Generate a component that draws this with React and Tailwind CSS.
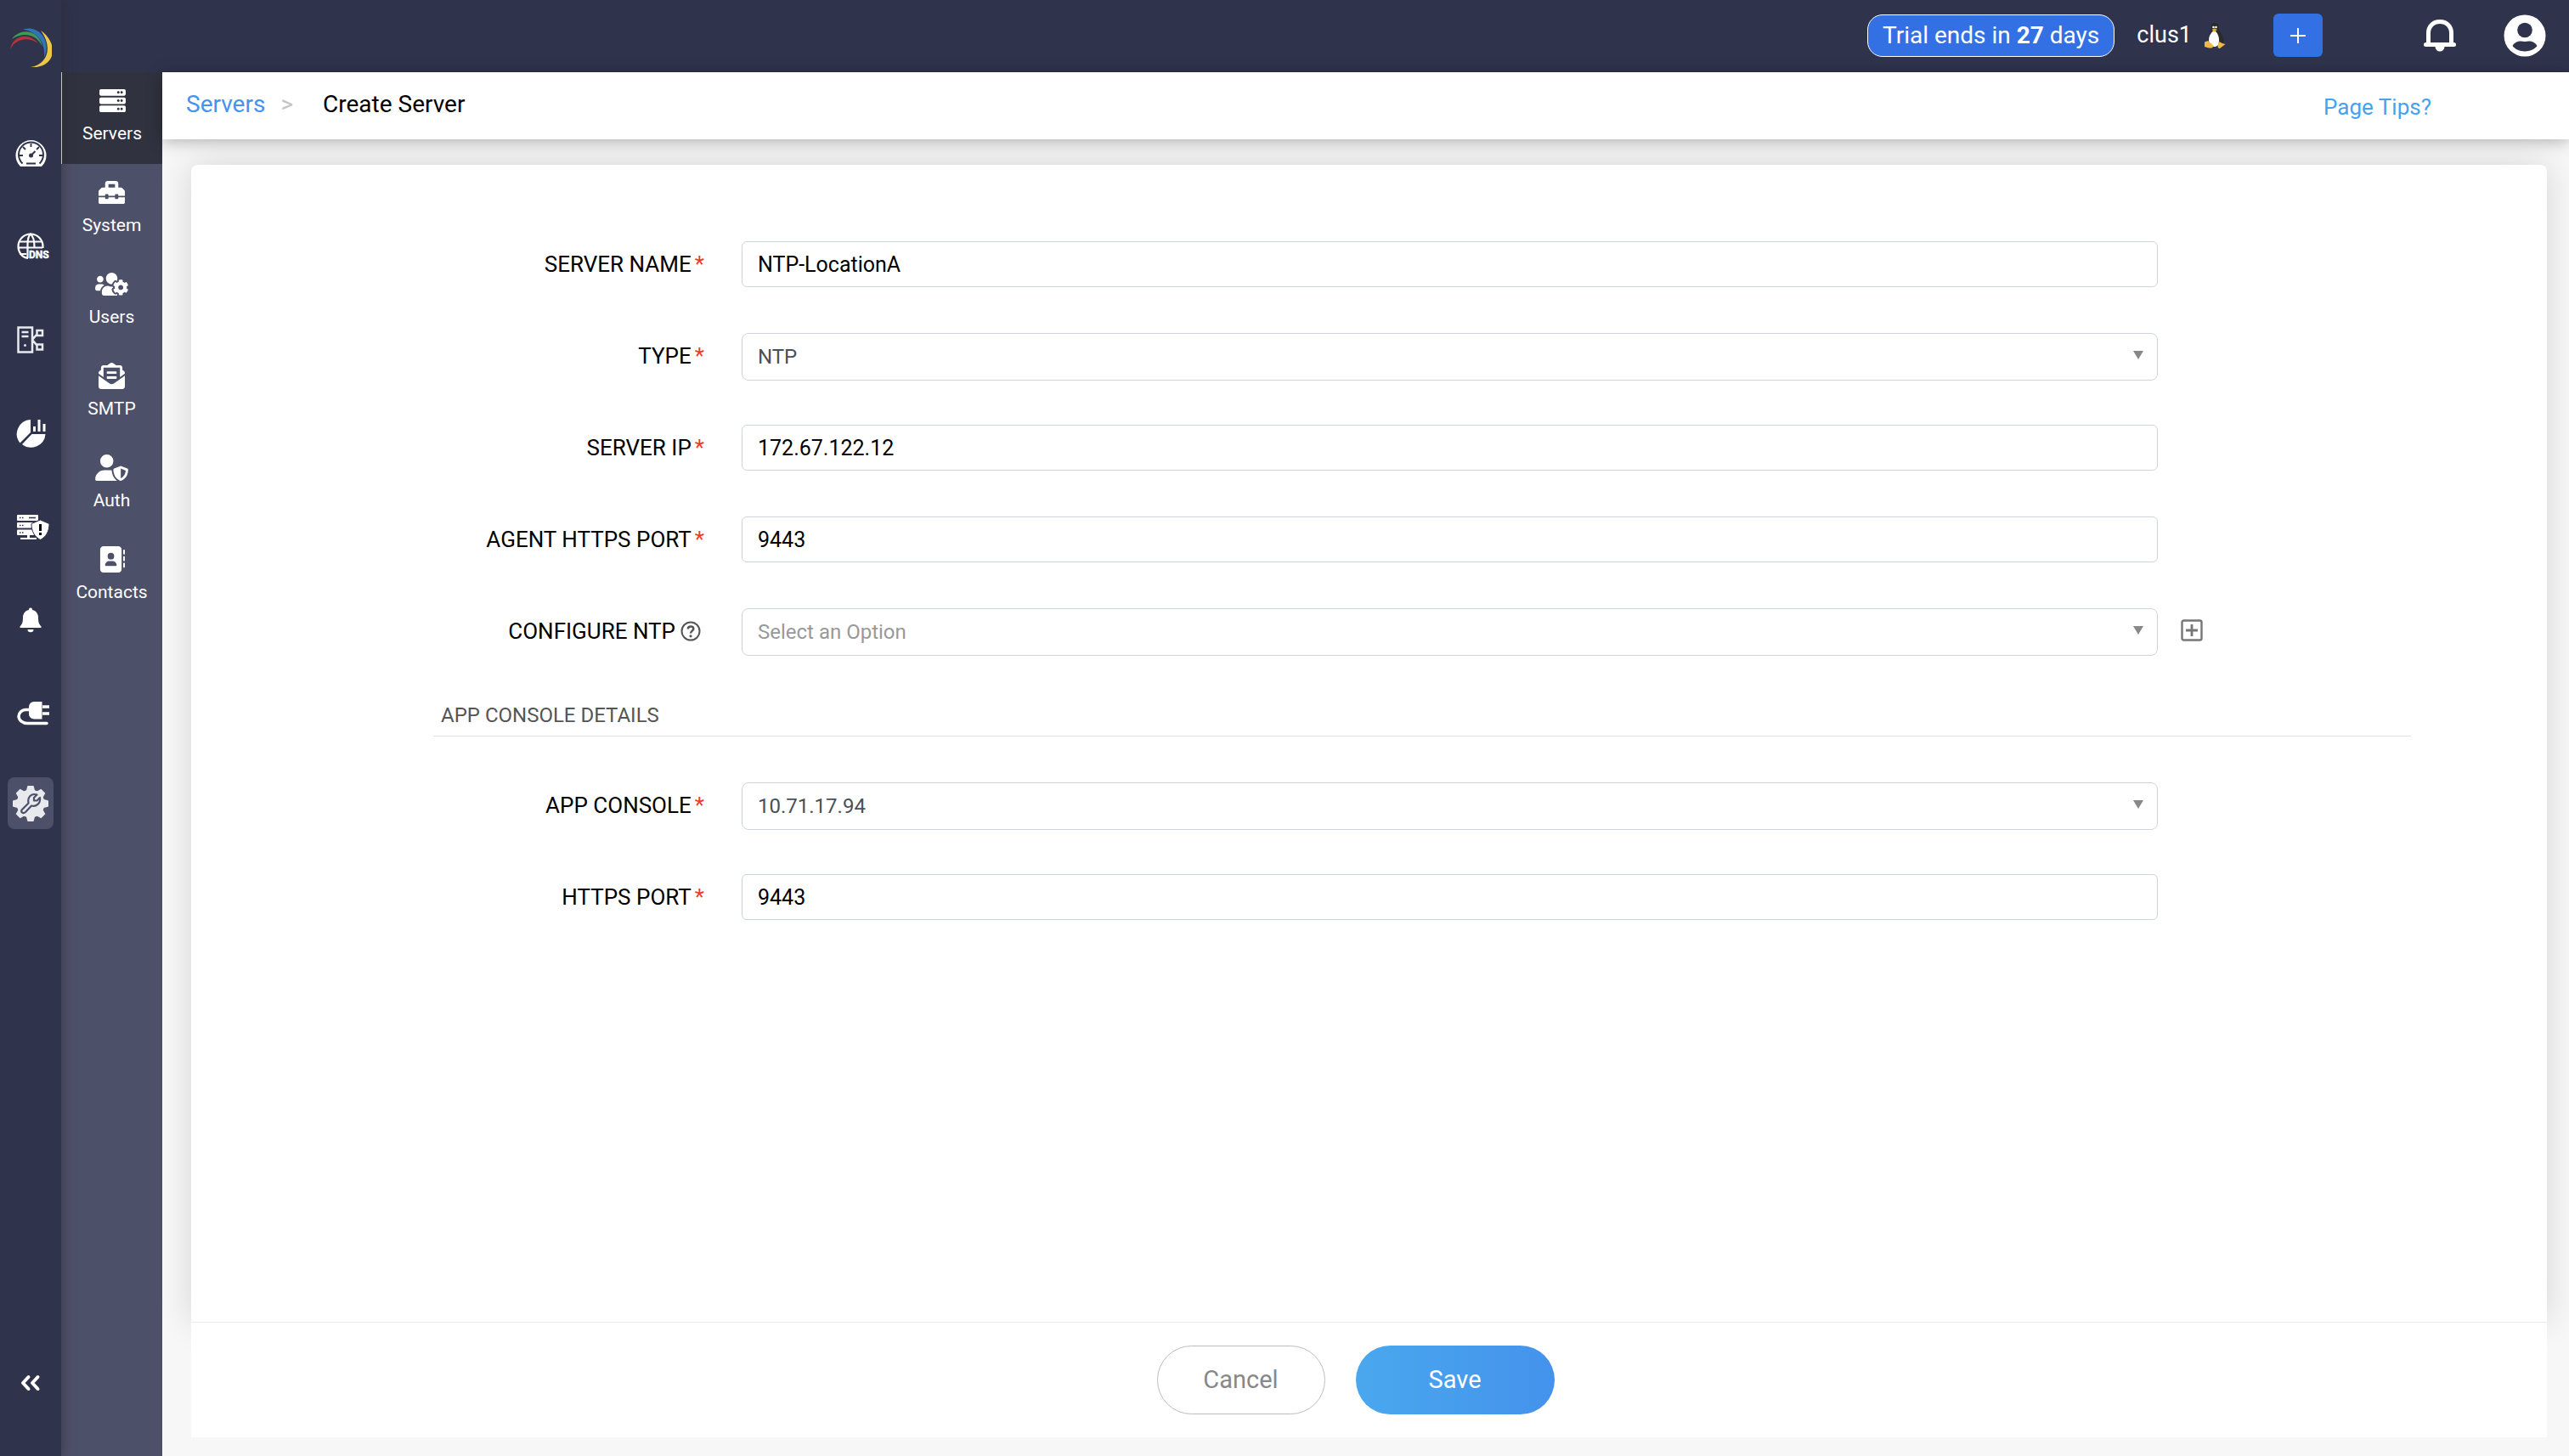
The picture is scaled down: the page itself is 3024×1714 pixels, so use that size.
import { useId } from "react";
import { FaServer, FaToolbox, FaUsersCog, FaEnvelopeOpenText } from "react-icons/fa";
import { FaUserShield, FaAddressBook } from "react-icons/fa6";

function LogoMark() {
  return (
    <svg viewBox="0 0 50 48" className="h-12 w-[50px]" aria-hidden="true">
      <path d="M1 25C4 9 22 4 34 18C22 10 8 12 1 25Z" fill="#b8323c" />
      <path d="M3 13C13 -1 35 2 39 22C32 7 17 4 3 13Z" fill="#3f9a58" />
      <path d="M16 1.500C35 -4 50 15 41 35C43 18 34 5 16 1.500Z" fill="#2f74b5" />
      <path d="M37 3C59 18 55 48 25 46C46 42 51 22 37 3Z" fill="#edc748" />
    </svg>
  );
}

function GaugeIcon() {
  return (
    <svg viewBox="0 0 37 33" className="h-[33px] w-[37px]" fill="none" stroke="white" aria-hidden="true">
      <path d="M6 32A18 18 0 1 1 31 32Z" fill="white" stroke="none" />
      <path d="M8.500 28.500A14.500 14.500 0 1 1 28.500 28.500" stroke="#2f334c" strokeWidth="2" />
      <path d="M5 19h4M28 19h4M18.500 5v4M9 9l3 3M28 9l-3 3M13 28.500h11" stroke="#2f334c" strokeWidth="1.800" />
      <path d="M18.500 19l5-5" stroke="#2f334c" strokeWidth="2" />
      <circle cx="18.500" cy="19" r="2.500" fill="#2f334c" stroke="none" />
    </svg>
  );
}

function DnsIcon() {
  return (
    <svg viewBox="0 0 42 36" className="h-9 w-[42px]" fill="none" stroke="white" strokeWidth="2.200" aria-hidden="true">
      <g transform="translate(2 2)">
        <path d="M13 30C6 29 1.500 23 1.500 16A14.500 14.500 0 0 1 30.500 16V18" />
        <path d="M3 10.500H29M1.500 17.500H30M3 25H11" />
        <path d="M12.500 30V14C12.500 8 13 4 16 1.500C19 4 20.500 10 20.500 17" />
        <text x="14" y="30" fontFamily="Roboto, sans-serif" fontSize="12" fontWeight="700" fill="white" stroke="white" strokeWidth="0.500">
          DNS
        </text>
      </g>
    </svg>
  );
}

function TopologyIcon() {
  return (
    <svg viewBox="0 0 32 32" className="size-8" fill="none" stroke="#e8eaf0" strokeWidth="2.500" aria-hidden="true">
      <path d="M1.500 1.500H18V30.500H1.500ZM5.500 7H13.500M5.500 12H13.500M23.500 5H30V11H23.500ZM23.500 21.500H30V27.500H23.500ZM23 10L18 16L23 22" />
      <circle cx="9.500" cy="22.500" r="1.500" fill="#e8eaf0" stroke="none" />
    </svg>
  );
}

function ReportIcon() {
  return (
    <svg viewBox="0 0 35 35" className="size-[35px]" fill="white" aria-hidden="true">
      <path d="M17 1V16L4.500 28.500A17 17 0 0 1 17 1Z" />
      <path d="M18.500 18H34.500A17 17 0 0 1 7 30Z" />
      <path d="M20 9h3v6h-3zM25.500 1h3v14h-3zM31.500 6h3v9h-3z" />
    </svg>
  );
}

function ServerAlertIcon() {
  return (
    <svg viewBox="0 0 40 31" className="h-[31px] w-10" aria-hidden="true">
      <g fill="white">
        <rect x="1" y="1" width="25" height="7" rx="1" />
        <rect x="1" y="10" width="20" height="6.500" rx="1" />
        <rect x="1" y="18.500" width="20" height="6.500" rx="1" />
        <path d="M13 24h3v4h8v2H5v-2h8z" />
        <path d="M28.500 7L39 11.500C39 21 35 27 28.500 30.500C22 27 18 21 18 11.500Z" stroke="#2f334c" strokeWidth="1" />
      </g>
      <path d="M4 4.500h1.500M7 4.500h1.500M4 13.500h1.500M7 13.500h1.500M4 22h1.500M7 22h1.500M15 4.500h8" stroke="#2f334c" strokeWidth="1.500" />
      <path d="M28.500 12v8M28.500 22v3" stroke="black" strokeWidth="3" />
    </svg>
  );
}

function AlertBellIcon() {
  return (
    <svg viewBox="0 0 26 30" className="h-[30px] w-[26px]" fill="white" aria-hidden="true">
      <path d="M13 0.500a2 2 0 0 1 2 2.500c5 1 7 5 7 9c0 6 1 7.500 3.500 10.500V24H.5V22.500C3 19.500 4 18 4 12c0-4 2-8 7-9a2 2 0 0 1 2-2.500Z" />
      <path d="M9.500 26h7a3.500 3.200 0 0 1-7 0Z" />
    </svg>
  );
}

function PlugIcon() {
  return (
    <svg viewBox="0 0 39 30" className="h-[30px] w-[39px]" aria-hidden="true">
      <path d="M14 10.500H10A8 8 0 0 0 2 18C2 23 7 26.500 12 26.500H35" fill="none" stroke="white" strokeWidth="3.500" strokeLinecap="round" />
      <path d="M29.500 1V21.500H20A6 6 0 0 1 14 15.500V7A6 6 0 0 1 20 1Z" fill="white" />
      <path d="M30 7h8M30 15h8" stroke="white" strokeWidth="3.500" />
    </svg>
  );
}

function GearWrenchIcon() {
  const teeth = [0, 45, 90, 135, 180, 225, 270, 315];
  return (
    <svg viewBox="0 0 42 42" className="size-[42px]" aria-hidden="true">
      <g fill="#e8e9ed">
        <circle cx="21" cy="21" r="16.500" />
        {teeth.map((angle) => (
          <path key={angle} d="M15.500 7L17.500 0H24.500L26.500 7Z" transform={`rotate(${angle} 21 21)`} />
        ))}
      </g>
      <path
        d="M11 28L18.500 20.500C17 13 22 8.500 28.500 10.500L25 14V17.500L28.500 17.500L32 14C33 21 27.500 25 22 23.500L15 31C12 33.500 8.500 30.500 11 28Z"
        fill="none"
        stroke="#4d5069"
        strokeWidth="2.200"
        strokeLinejoin="round"
      />
    </svg>
  );
}

function CollapseIcon() {
  return (
    <svg viewBox="0 0 24 20" className="h-5 w-6" fill="none" stroke="white" strokeWidth="4" strokeLinecap="round" strokeLinejoin="round" aria-hidden="true">
      <path d="M9.500 3L3 10L9.500 17M20.500 3L14 10L20.500 17" />
    </svg>
  );
}

function PenguinIcon() {
  return (
    <svg viewBox="0 0 26 30" className="h-[30px] w-[26px]" aria-hidden="true">
      <path d="M13 0C16.500 0 17.500 2 17.500 5.500C17.500 10 23.500 14 23.500 21C23.500 26 20 28 13 28C7 28 4 26 5 20C6 15 9 10 8.500 5.500C8.500 2 10 0 13 0Z" fill="#2b2b2b" />
      <path d="M12 9C14 9 17.500 13 18 19C18.500 26 16 28 12.500 28C9 28 6 24 6 20C6 15 9 11 12 9Z" fill="white" />
      <circle cx="11.500" cy="5" r="1.300" fill="white" />
      <circle cx="14.500" cy="5" r="1.300" fill="white" />
      <path d="M9.500 8L12.500 6.500L16 8L12.500 10.500Z" fill="#f0b02e" />
      <path d="M1 22.500L5 21L11 26C12 29 9 30 6 29.500L1 28Z" fill="#f0b846" />
      <path d="M18 22L22 24L25.500 25L19 30C16 30 16 27 18 22Z" fill="#f0b846" />
    </svg>
  );
}

function HeaderBellIcon() {
  return (
    <svg viewBox="0 0 38 38" className="size-[38px]" aria-hidden="true">
      <path d="M5.500 29V16C5.500 8 11 2.500 19 2.500S32.500 8 32.500 16V29" fill="none" stroke="white" strokeWidth="5" />
      <path d="M2.500 27H35.500A2.500 2.500 0 0 1 35.500 32H24.500A5.500 5.500 0 0 1 13.500 32H2.500A2.500 2.500 0 0 1 2.500 27Z" fill="white" />
    </svg>
  );
}

function AccountIcon() {
  return (
    <svg viewBox="0 0 50 50" className="size-[50px]" aria-hidden="true">
      <circle cx="25" cy="25" r="24.500" fill="white" />
      <circle cx="25" cy="18.500" r="8.800" fill="#2f334c" />
      <path d="M10.500 37C13 32 19 30.500 25 32C31 30.500 37 32 39.500 37C33 45.500 17 45.500 10.500 37Z" fill="#2f334c" />
    </svg>
  );
}

function HelpIcon() {
  return (
    <svg viewBox="0 0 24 24" className="size-6" fill="none" stroke="#555" strokeWidth="2" aria-hidden="true">
      <circle cx="12" cy="12" r="10.500" />
      <path d="M8.800 9.500C9 5.500 15.300 5.800 15.300 9.300C15.300 11.500 12 11.800 12 14.500" strokeWidth="2.500" />
      <circle cx="12" cy="17.800" r="1.600" fill="#555" stroke="none" />
    </svg>
  );
}

function AddBoxIcon() {
  return (
    <svg viewBox="0 0 26 26" className="size-[26px]" fill="none" stroke="#777" aria-hidden="true">
      <rect x="1.500" y="1.500" width="23" height="23" rx="2" strokeWidth="2.400" />
      <path d="M13 6V20M6 13H20" strokeWidth="2.800" />
    </svg>
  );
}

const mainNav = [
  { label: "Dashboard", Icon: GaugeIcon },
  { label: "DNS", Icon: DnsIcon, wide: true },
  { label: "Infrastructure", Icon: TopologyIcon },
  { label: "Reports", Icon: ReportIcon },
  { label: "Server protection", Icon: ServerAlertIcon, wide: true },
  { label: "Alerts", Icon: AlertBellIcon },
  { label: "Integrations", Icon: PlugIcon, wide: true },
];

const subNav = [
  { label: "Servers", Icon: FaServer, active: true },
  { label: "System", Icon: FaToolbox },
  { label: "Users", Icon: FaUsersCog },
  { label: "SMTP", Icon: FaEnvelopeOpenText },
  { label: "Auth", Icon: FaUserShield },
  { label: "Contacts", Icon: FaAddressBook },
];

function MainSidebar() {
  return (
    <nav aria-label="Main" className="z-10 flex w-[72px] shrink-0 flex-col items-center bg-[#2f334c] pt-[33px] shadow-[0_0_14px_rgba(40,40,40,0.55)]">
      <LogoMark />
      <div className="mt-11 flex flex-col items-center">
        {mainNav.map(({ label, Icon, wide }) => (
          <a key={label} href="#" aria-label={label} className={"flex h-[110px] items-center " + (wide ? "pl-1.5" : "")}>
            <Icon />
          </a>
        ))}
        <a href="#" aria-label="Settings" aria-current="page" className="mt-5 flex h-[61px] w-[54px] items-center justify-center rounded-lg bg-[#4d5069]">
          <GearWrenchIcon />
        </a>
      </div>
      <button type="button" aria-label="Collapse menu" className="mt-auto mb-[76px]">
        <CollapseIcon />
      </button>
    </nav>
  );
}

function SubSidebar() {
  return (
    <nav aria-label="Settings" className="w-[119px] shrink-0 bg-[#4d5069]">
      {subNav.map(({ label, Icon, active }) => (
        <a
          key={label}
          href="#"
          className={
            "flex h-27 flex-col items-center gap-2 pt-[18px] text-[21px] leading-[30px] text-white " +
            (active ? "border-l border-white bg-[#30323f]" : "")
          }
        >
          <Icon className="h-[31px] w-[39px]" />
          {label}
        </a>
      ))}
    </nav>
  );
}

function TopBar() {
  return (
    <header className="flex h-[85px] shrink-0 items-center justify-end bg-[#2f334c] pr-[27px] pb-0.5 text-[27px] text-white">
      <button type="button" className="h-[50px] rounded-[18px] border border-white bg-[#3370e4] px-[17px] text-[28px]">
        Trial ends in <strong className="font-bold">27</strong> days
      </button>
      <span className="ml-[26px]">clus1</span>
      <span className="ml-[14px]">
        <PenguinIcon />
      </span>
      <button type="button" aria-label="Add" className="ml-14 flex h-[51px] w-[58px] items-center justify-center rounded-md bg-[#3370e4]">
        <svg viewBox="0 0 20 20" className="size-5" stroke="white" strokeWidth="2" aria-hidden="true">
          <path d="M10 1V19M1 10H19" />
        </svg>
      </button>
      <button type="button" aria-label="Notifications" className="ml-[119px]">
        <HeaderBellIcon />
      </button>
      <button type="button" aria-label="Account" className="ml-14">
        <AccountIcon />
      </button>
    </header>
  );
}

function Required() {
  return <span className="ml-1 text-[#f03a2b]">*</span>;
}

function Row({ id, label, required, help, children, extra }) {
  return (
    <div className="grid grid-cols-[648fr_1667fr_458fr] items-start">
      <div className="flex h-[54px] items-center justify-end pr-11 text-[26px] text-black">
        <label htmlFor={id}>
          {label}
          {required && <Required />}
        </label>
        {help && (
          <button type="button" aria-label="Help" className="mr-1 ml-1.5">
            <HelpIcon />
          </button>
        )}
      </div>
      {children}
      {extra}
    </div>
  );
}

function TextRow({ label, value, numeric }) {
  const id = useId();
  return (
    <Row id={id} label={label} required>
      <input
        id={id}
        type="text"
        inputMode={numeric ? "numeric" : "text"}
        defaultValue={value}
        className="mb-0.5 h-[54px] w-full rounded-md border border-[#ced4da] bg-white px-[18px] text-[25px] text-black"
      />
    </Row>
  );
}

function SelectRow({ label, value, required, help, placeholder, extra }) {
  const id = useId();
  return (
    <Row id={id} label={label} required={required} help={help} extra={extra}>
      <div className="relative">
        <select
          id={id}
          defaultValue={value}
          className={
            "block h-14 w-full appearance-none rounded-lg border border-[#ced4da] bg-white px-[18px] text-[24px] " +
            (placeholder ? "text-[#999]" : "text-[#495057]")
          }
        >
          <option>{value}</option>
        </select>
        <svg viewBox="0 0 12 10" className="pointer-events-none absolute top-[21px] right-[17px] h-2.5 w-3" fill="#888" aria-hidden="true">
          <path d="M0 0H12L6 10Z" />
        </svg>
      </div>
    </Row>
  );
}

export default function App() {
  return (
    <div className="flex min-h-screen bg-[#f7f7f7] font-['Roboto',sans-serif]">
      <MainSidebar />
      <div className="flex min-w-0 flex-1 flex-col">
        <TopBar />
        <div className="flex flex-1">
          <SubSidebar />
          <main className="flex min-w-0 flex-1 flex-col">
            <div className="z-10 flex h-[79px] shrink-0 items-center justify-between bg-white pr-[162px] pl-7 shadow-[0_2px_18px_rgba(0,0,0,0.3)]">
              <nav aria-label="Breadcrumb" className="flex items-center pb-1 text-[28px]">
                <a href="#" className="text-[#4593ec]">Servers</a>
                <span className="ml-[18px] text-[#c4c4c4]">&gt;</span>
                <span className="ml-[35px] text-black">Create Server</span>
              </nav>
              <a href="#" className="pt-1 text-[26px] text-[#46a2ec]">Page Tips?</a>
            </div>
            <form className="mt-[30px] mr-[26px] mb-[22px] ml-[34px] flex flex-1 flex-col" onSubmit={(e) => e.preventDefault()}>
              <div className="flex-1 rounded-t-lg bg-white pt-[90px] pb-10 shadow-[0_0_40px_rgba(0,0,0,0.14)]">
                <div className="flex flex-col gap-[52px]">
                  <TextRow label="SERVER NAME" value="NTP-LocationA" />
                  <SelectRow label="TYPE" value="NTP" required />
                  <TextRow label="SERVER IP" value="172.67.122.12" />
                  <TextRow label="AGENT HTTPS PORT" value="9443" numeric />
                  <SelectRow
                    label="CONFIGURE NTP"
                    value="Select an Option"
                    placeholder
                    help
                    extra={
                      <button type="button" aria-label="Add NTP configuration" className="mt-[13px] ml-[27px] w-fit">
                        <AddBoxIcon />
                      </button>
                    }
                  />
                </div>
                <h2 className="mt-[52px] mr-[160px] mb-[54px] ml-[285px] border-b border-[#e2e2e2] px-[9px] pb-1.5 text-[24px] leading-9 text-[#555]">
                  APP CONSOLE DETAILS
                </h2>
                <div className="flex flex-col gap-[52px]">
                  <SelectRow label="APP CONSOLE" value="10.71.17.94" required />
                  <TextRow label="HTTPS PORT" value="9443" numeric />
                </div>
              </div>
              <div className="relative flex h-34 shrink-0 items-center justify-center gap-9 border-t border-[#ebebeb] bg-white pr-8 text-[29px]">
                <button type="button" className="h-[81px] w-[198px] rounded-full border border-[#bdbdbd] bg-white text-[#888]">
                  Cancel
                </button>
                <button type="submit" className="h-[81px] w-[234px] rounded-full bg-linear-to-r from-[#4aa8ee] to-[#4492ec] text-white">
                  Save
                </button>
              </div>
            </form>
          </main>
        </div>
      </div>
    </div>
  );
}
